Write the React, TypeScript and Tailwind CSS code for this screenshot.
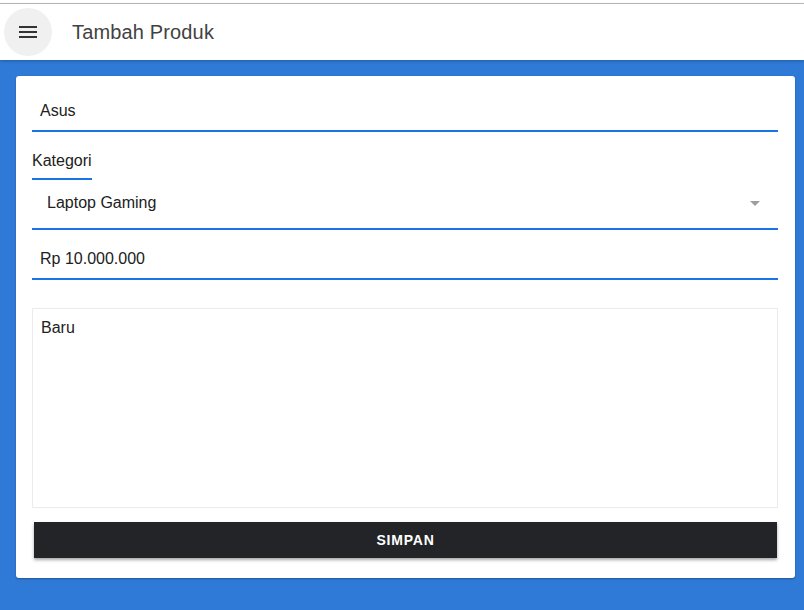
import React from "react";

export default function App() {
  return (
    <div className="w-[804px] h-[610px] flex flex-col bg-[#2f7ad6] overflow-hidden" style={{ fontFamily: '"Liberation Sans", Arial, sans-serif' }}>
      <div className="h-[3px] bg-white shrink-0" />
      <div className="h-px bg-[#bdbdbd] shrink-0" />
      <header className="h-[56px] bg-white shrink-0 flex items-center pl-[4px] relative z-10 shadow-[0_1px_3px_rgba(0,0,0,0.25)]">
        <button className="w-[48px] h-[48px] rounded-full bg-[#f0f0f0] flex items-center justify-center">
          <svg width="18" height="12" viewBox="0 0 18 12">
            <rect x="0" y="0" width="18" height="2" fill="#333" />
            <rect x="0" y="5" width="18" height="2" fill="#333" />
            <rect x="0" y="10" width="18" height="2" fill="#333" />
          </svg>
        </button>
        <div className="ml-[20px] text-[20px] tracking-[0.15px] text-[#424242] leading-none">Tambah Produk</div>
      </header>
      <div className="px-[16px] pt-[16px]">
        <div className="w-[779px] h-[502px] bg-white rounded-[3px] shadow-[0_1px_2px_rgba(0,0,0,0.3)] px-[16px] pt-[16px] flex flex-col">
          <div className="h-[40px] flex items-center pl-[8px] text-[16px] text-[#212121] border-b-2 border-[#1a73e8] w-[746px]">Asus</div>
          <div className="mt-[21px] text-[16px] text-[#212121] leading-none w-[60px] pb-[9px] border-b-2 border-[#1a73e8]">Kategori</div>
          <div className="h-[50px] flex items-center pl-[15px] pr-[18px] pb-[2px] text-[16px] text-[#212121] border-b-2 border-[#1a73e8] w-[746px]">
            <span className="flex-1">Laptop Gaming</span>
            <svg width="10" height="5" viewBox="0 0 10 5"><polygon points="0,0 10,0 5,5" fill="#9e9e9e" /></svg>
          </div>
          <div className="h-[50px] flex items-center pl-[8px] pt-[10px] text-[16px] text-[#212121] border-b-2 border-[#1a73e8] w-[746px]">Rp 10.000.000</div>
          <div className="mt-[28px] h-[200px] w-[746px] border border-[#ebebeb] px-[8px] pt-[7px] text-[16px] text-[#212121]">Baru</div>
          <button className="mt-[14px] ml-[2px] w-[743px] h-[36px] bg-[#232427] text-white text-[14px] font-bold tracking-[0.8px] shadow-[0_2px_3px_rgba(0,0,0,0.35)]">SIMPAN</button>
        </div>
      </div>
    </div>
  );
}
